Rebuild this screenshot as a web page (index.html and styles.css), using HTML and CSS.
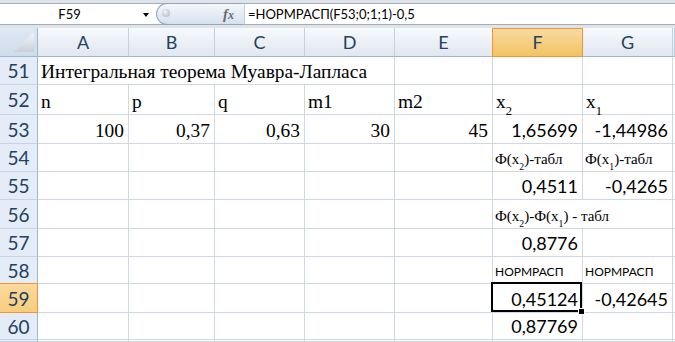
FILE: index.html
```html
<!DOCTYPE html>
<html>
<head>
<meta charset="utf-8">
<link rel="stylesheet" href="styles.css">
</head>
<body>
<div class="fbar">
  <div class="namebox"><span class="name">F59</span><span class="caret"></span></div>
  <div class="fxbox"><span class="knob"></span><span class="fx">f<span class="fx-x">x</span></span></div>
  <div class="formula">=НОРМРАСП(F53;0;1;1)-0,5</div>
</div>
<div class="sheet">
  <div class="corner"><svg width="37" height="28" viewBox="0 0 37 28"><defs><linearGradient id="tg" x1="0" y1="0" x2="0" y2="1"><stop offset="0" stop-color="#f4f6f9"/><stop offset="1" stop-color="#c9d0d9"/></linearGradient></defs><polygon points="14,24 34,4 34,24" fill="url(#tg)"/></svg></div>
  <div class="ch">A</div><div class="ch">B</div><div class="ch">C</div><div class="ch">D</div><div class="ch">E</div><div class="ch sel">F</div><div class="ch">G</div><div class="ch"></div>

  <div class="rh">51</div>
  <div class="c span4 serif">Интегральная теорема Муавра-Лапласа</div>
  <div class="c"></div><div class="c"></div><div class="c"></div><div class="c"></div>

  <div class="rh">52</div>
  <div class="c serif">n</div><div class="c serif">p</div><div class="c serif">q</div><div class="c serif">m1</div><div class="c serif">m2</div>
  <div class="c serif">x<sub>2</sub></div><div class="c serif">x<sub>1</sub></div><div class="c"></div>

  <div class="rh">53</div>
  <div class="c serif r">100</div><div class="c serif r">0,37</div><div class="c serif r">0,63</div><div class="c serif r">30</div><div class="c serif r">45</div>
  <div class="c sans r">1,65699</div><div class="c sans r">-1,44986</div><div class="c"></div>

  <div class="rh">54</div>
  <div class="c"></div><div class="c"></div><div class="c"></div><div class="c"></div><div class="c"></div>
  <div class="c lbl">Ф(x<sub>2</sub>)-табл</div><div class="c lbl">Ф(x<sub>1</sub>)-табл</div><div class="c"></div>

  <div class="rh">55</div>
  <div class="c"></div><div class="c"></div><div class="c"></div><div class="c"></div><div class="c"></div>
  <div class="c sans r">0,4511</div><div class="c sans r">-0,4265</div><div class="c"></div>

  <div class="rh">56</div>
  <div class="c"></div><div class="c"></div><div class="c"></div><div class="c"></div><div class="c"></div>
  <div class="c span2 lbl">Ф(x<sub>2</sub>)-Ф(x<sub>1</sub>) - табл</div><div class="c"></div>

  <div class="rh">57</div>
  <div class="c"></div><div class="c"></div><div class="c"></div><div class="c"></div><div class="c"></div>
  <div class="c sans r">0,8776</div><div class="c"></div><div class="c"></div>

  <div class="rh">58</div>
  <div class="c"></div><div class="c"></div><div class="c"></div><div class="c"></div><div class="c"></div>
  <div class="c caps">НОРМРАСП</div><div class="c caps">НОРМРАСП</div><div class="c"></div>

  <div class="rh sel">59</div>
  <div class="c"></div><div class="c"></div><div class="c"></div><div class="c"></div><div class="c"></div>
  <div class="c sans r active">0,45124</div><div class="c sans r">-0,42645</div><div class="c"></div>

  <div class="rh">60</div>
  <div class="c"></div><div class="c"></div><div class="c"></div><div class="c"></div><div class="c"></div>
  <div class="c sans r">0,87769</div><div class="c"></div><div class="c"></div>

  <div class="rh"></div>
  <div class="c"></div><div class="c"></div><div class="c"></div><div class="c"></div><div class="c"></div>
  <div class="c"></div><div class="c"></div><div class="c"></div>
</div>
</body>
</html>
```

FILE: styles.css
```css
html, body {
  margin: 0;
  padding: 0;
}
body {
  width: 675px;
  height: 342px;
  overflow: hidden;
  background: #dfe4eb;
  font-family: Lato, "Open Sans", sans-serif;
  color: #000;
}
.fbar {
  display: flex;
  height: 20px;
  margin: 3px 0 3px;
  background: #fff;
  border-top: 1px solid #a3abb6;
  border-bottom: 1px solid #a3abb6;
}
.namebox {
  width: 156px;
  display: flex;
  align-items: center;
}
.name {
  width: 139px;
  text-align: center;
  font-size: 13px;
  line-height: 20px;
}
.caret {
  width: 0;
  height: 0;
  border-left: 3.5px solid transparent;
  border-right: 3.5px solid transparent;
  border-top: 4px solid #000;
  margin-left: 4px;
  margin-top: 1px;
}
.fxbox {
  width: 89px;
  height: 22px;
  margin: -1px 0;
  box-sizing: border-box;
  border: 1px solid #97a6ba;
  border-right: 1px solid #c6d0dd;
  border-radius: 11px 0 0 11px;
  background: linear-gradient(#f5f8fc, #d6e0ee);
  display: flex;
  align-items: center;
  justify-content: space-between;
  padding: 0 10px 0 5px;
}
.knob {
  width: 8px;
  height: 8px;
  border-radius: 50%;
  background: radial-gradient(circle at 40% 35%, #f2f3f5, #a9afb7);
  margin-top: -3px;
}
.fx {
  font-family: "Liberation Serif", serif;
  font-style: italic;
  font-weight: bold;
  font-size: 15px;
  color: #6b6b6b;
  line-height: 1;
}
.fx-x {
  font-size: 12px;
}
.formula {
  flex: 1;
  padding-left: 3px;
  font-size: 13px;
  line-height: 20px;
}
.sheet {
  display: grid;
  width: 675px;
  height: 314px;
  overflow: hidden;
  grid-template-columns: 38px 91px 86px 90px 90px 98px 90px 90px 2px;
  grid-template-rows: 29px 28px 30px 29px 28px 28px 29px 28px 27px 29px 27px 2px;
  background: #fff;
}
.sheet > div {
  box-sizing: border-box;
}
.corner {
  background: linear-gradient(#dfe8f3, #cfdcec);
  border-right: 1px solid #9eb6ce;
  border-bottom: 1px solid #9eb6ce;
}
.corner svg {
  display: block;
}
.ch {
  background: linear-gradient(#f7f9fc, #e1e7f0);
  border-right: 1px solid #c5d0de;
  border-bottom: 1px solid #9eb6ce;
  display: flex;
  align-items: center;
  justify-content: center;
  font-size: 18px;
  color: #24405f;
}
.ch.sel {
  background: linear-gradient(#f9dba3, #f2c363);
  border-right: 1px solid #f29536;
  border-bottom: 1px solid #f29536;
  box-shadow: -1px 0 0 #f29536, inset 0 1px 0 #f29536;
}
.rh {
  background: #e4ecf7;
  border-right: 1px solid #9eb6ce;
  border-bottom: 1px solid #c5d3e4;
  display: flex;
  align-items: center;
  justify-content: center;
  font-size: 19px;
  color: #24405f;
}
.rh.sel {
  background: linear-gradient(#fcd99b, #f8cd7d);
  border-right: 1px solid #f29536;
  border-bottom: 1px solid #f29536;
  box-shadow: 0 -1px 0 #f29536;
}
.c {
  border-right: 1px solid #d0d7e5;
  border-bottom: 1px solid #d0d7e5;
  display: flex;
  align-items: flex-end;
  white-space: nowrap;
  padding: 0 4px 0 3px;
  line-height: 1;
}
.span4 {
  grid-column: span 4;
}
.span2 {
  grid-column: span 2;
}
.r {
  justify-content: flex-end;
}
.serif {
  font-family: "Liberation Serif", serif;
  font-size: 19.4px;
  padding-bottom: 3px;
}
.sans {
  font-family: Lato, sans-serif;
  font-size: 18px;
  padding-bottom: 4px;
}
.lbl {
  font-family: "Liberation Serif", serif;
  font-size: 15px;
  padding-bottom: 4px;
  padding-left: 2px;
}
.caps {
  font-family: Lato, sans-serif;
  font-size: 12px;
  padding-bottom: 5px;
  padding-left: 2px;
}
sub {
  font-size: 0.65em;
  vertical-align: -0.3em;
  line-height: 0;
}
.active {
  position: relative;
  z-index: 2;
}
.active::after {
  content: "";
  position: absolute;
  left: -2px;
  top: -2px;
  right: 0;
  bottom: 0;
  border: 2px solid #000;
}
.active::before {
  content: "";
  position: absolute;
  right: -3px;
  bottom: -3px;
  width: 5px;
  height: 5px;
  background: #000;
  border: 1px solid #fff;
  z-index: 1;
}
```
